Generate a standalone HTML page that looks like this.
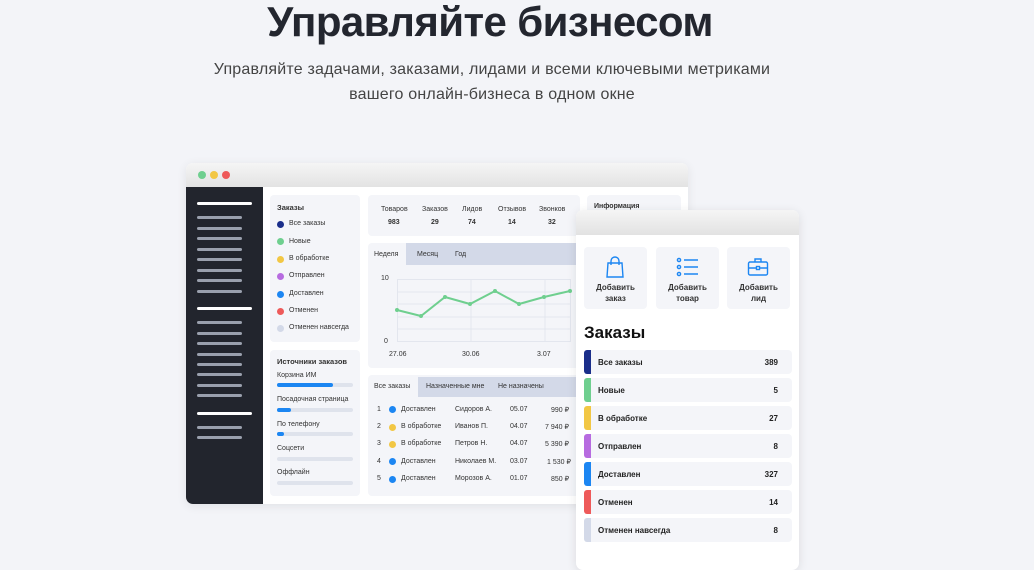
<!DOCTYPE html>
<html><head><meta charset="utf-8"><style>
*{margin:0;padding:0;box-sizing:border-box}
body{width:1034px;height:554px;background:#f3f4f8;font-family:"Liberation Sans","Noto Sans CJK SC",sans-serif;position:relative;overflow:hidden;color:#23262f}
.a{position:absolute}
h1{position:absolute;left:0;width:980px;top:-2px;text-align:center;font-size:42px;font-weight:bold;color:#23262f;letter-spacing:-0.6px}
.sub{position:absolute;left:0;width:984px;text-align:center;font-size:16px;color:#444;letter-spacing:0.2px}
.card{position:absolute;background:#f4f5f9;border-radius:4px}
.t{position:absolute;font-size:7px;color:#333;white-space:nowrap}
.sl{position:absolute;height:3px;border-radius:2px;background:#9aa0ad;left:197px;width:45px}
.sw{background:#fff;width:55px}
.dot{position:absolute;width:7px;height:7px;border-radius:50%}
.bar{position:absolute;left:277px;width:76px;height:4px;border-radius:2px;background:#dfe3ec}
.bar i{display:block;height:4px;border-radius:2px;background:#1c86f2}
.row{position:absolute;left:584px;width:208px;height:24px;background:#f4f5f9;border-radius:4px;font-size:8px;font-weight:bold;color:#222}
.row b{position:absolute;left:0;top:0;width:7px;height:24px;border-radius:3px 0 0 3px}
.row span{position:absolute;left:14px;top:8px}
.row em{position:absolute;right:14px;top:8px;font-style:normal}
.btn{position:absolute;top:247px;width:63px;height:62px;background:#f4f5f9;border-radius:4px;text-align:center;font-size:8px;font-weight:bold;color:#333;line-height:11px}
.btn svg{position:absolute;left:20px;top:9px}
.btn div{position:absolute;top:35px;width:100%}
</style></head><body>
<h1>Управляйте бизнесом</h1>
<div class="sub" style="top:61px">Управляйте задачами, заказами, лидами и всеми ключевыми метриками</div>
<div class="sub" style="top:86px">вашего онлайн-бизнеса в одном окне</div>

<div class="a" style="left:186px;top:163px;width:502px;height:341px;background:#fff;border-radius:7px;box-shadow:0 2px 10px rgba(0,0,0,.08);overflow:hidden">
 <div class="a" style="left:0;top:0;width:502px;height:24px;background:linear-gradient(#f5f5f5,#e3e3e3)"></div>
 <div class="a" style="left:0;top:24px;width:77px;height:317px;background:#22252d"></div>
</div>
<div class="dot" style="left:198px;top:171px;width:8px;height:8px;background:#6fcf8f"></div>
<div class="dot" style="left:210px;top:171px;width:8px;height:8px;background:#f2c744"></div>
<div class="dot" style="left:222px;top:171px;width:8px;height:8px;background:#ee5a5a"></div>

<div class="sl sw" style="top:202px"></div>
<div class="sl" style="top:216px"></div><div class="sl" style="top:227px"></div><div class="sl" style="top:237px"></div><div class="sl" style="top:248px"></div><div class="sl" style="top:258px"></div><div class="sl" style="top:269px"></div><div class="sl" style="top:279px"></div><div class="sl" style="top:290px"></div>
<div class="sl sw" style="top:307px"></div>
<div class="sl" style="top:321px"></div><div class="sl" style="top:332px"></div><div class="sl" style="top:342px"></div><div class="sl" style="top:353px"></div><div class="sl" style="top:363px"></div><div class="sl" style="top:373px"></div><div class="sl" style="top:384px"></div><div class="sl" style="top:394px"></div>
<div class="sl sw" style="top:412px"></div>
<div class="sl" style="top:426px"></div><div class="sl" style="top:436px"></div>

<div class="card" style="left:270px;top:195px;width:90px;height:147px"></div>
<div class="t" style="left:277px;top:203px;font-weight:bold;font-size:7.5px">Заказы</div>
<div class="dot" style="left:277px;top:221px;background:#1a2e8a"></div><div class="t" style="left:289px;top:220px">Все заказы</div>
<div class="dot" style="left:277px;top:238px;background:#6fcf8f"></div><div class="t" style="left:289px;top:238px">Новые</div>
<div class="dot" style="left:277px;top:256px;background:#f2c744"></div><div class="t" style="left:289px;top:255px">В обработке</div>
<div class="dot" style="left:277px;top:273px;background:#b76be0"></div><div class="t" style="left:289px;top:272px">Отправлен</div>
<div class="dot" style="left:277px;top:291px;background:#1c86f2"></div><div class="t" style="left:289px;top:290px">Доставлен</div>
<div class="dot" style="left:277px;top:308px;background:#ee5a5a"></div><div class="t" style="left:289px;top:307px">Отменен</div>
<div class="dot" style="left:277px;top:325px;background:#d3d9e8"></div><div class="t" style="left:289px;top:324px">Отменен навсегда</div>

<div class="card" style="left:270px;top:350px;width:90px;height:146px"></div>
<div class="t" style="left:277px;top:357px;font-weight:bold;font-size:7.5px">Источники заказов</div>
<div class="t" style="left:277px;top:372px">Корзина ИМ</div><div class="bar" style="top:383px"><i style="width:56px"></i></div>
<div class="t" style="left:277px;top:396px">Посадочная страница</div><div class="bar" style="top:408px"><i style="width:14px"></i></div>
<div class="t" style="left:277px;top:421px">По телефону</div><div class="bar" style="top:432px"><i style="width:7px"></i></div>
<div class="t" style="left:277px;top:445px">Соцсети</div><div class="bar" style="top:457px"></div>
<div class="t" style="left:277px;top:469px">Оффлайн</div><div class="bar" style="top:481px"></div>

<div class="card" style="left:368px;top:195px;width:212px;height:41px"></div>
<div class="t" style="left:381px;top:206px">Товаров</div><div class="t" style="left:388px;top:219px;font-weight:bold">983</div>
<div class="t" style="left:422px;top:206px">Заказов</div><div class="t" style="left:431px;top:219px;font-weight:bold">29</div>
<div class="t" style="left:462px;top:206px">Лидов</div><div class="t" style="left:468px;top:219px;font-weight:bold">74</div>
<div class="t" style="left:498px;top:206px">Отзывов</div><div class="t" style="left:508px;top:219px;font-weight:bold">14</div>
<div class="t" style="left:539px;top:206px">Звонков</div><div class="t" style="left:548px;top:219px;font-weight:bold">32</div>
<div class="card" style="left:587px;top:195px;width:94px;height:41px"></div>
<div class="t" style="left:594px;top:203px;font-weight:bold">Информация</div>

<div class="card" style="left:368px;top:243px;width:212px;height:125px"></div>
<div class="a" style="left:406px;top:243px;width:174px;height:22px;background:#d3d9e8"></div>
<div class="t" style="left:374px;top:251px">Неделя</div><div class="t" style="left:417px;top:251px">Месяц</div><div class="t" style="left:455px;top:251px">Год</div>
<div class="t" style="left:381px;top:275px">10</div><div class="t" style="left:384px;top:338px">0</div>
<svg class="a" style="left:390px;top:275px" width="190" height="72">
<g stroke="#e3e6ee" stroke-width="1" fill="none"><rect x="7.5" y="4.5" width="173" height="62"/><line x1="7" y1="17" x2="180" y2="17"/><line x1="7" y1="29" x2="180" y2="29"/><line x1="7" y1="42" x2="180" y2="42"/><line x1="7" y1="54" x2="180" y2="54"/><line x1="81" y1="4" x2="81" y2="66"/><line x1="155" y1="4" x2="155" y2="66"/></g>
<polyline fill="none" stroke="#6fcf8f" stroke-width="2" points="7,35 31,41 55,22 80,29 105,16 129,29 154,22 180,16"/>
<g fill="#6fcf8f"><circle cx="7" cy="35" r="2"/><circle cx="31" cy="41" r="2"/><circle cx="55" cy="22" r="2"/><circle cx="80" cy="29" r="2"/><circle cx="105" cy="16" r="2"/><circle cx="129" cy="29" r="2"/><circle cx="154" cy="22" r="2"/><circle cx="180" cy="16" r="2"/></g>
</svg>
<div class="t" style="left:389px;top:351px">27.06</div><div class="t" style="left:462px;top:351px">30.06</div><div class="t" style="left:537px;top:351px">3.07</div>

<div class="card" style="left:368px;top:375px;width:212px;height:121px"></div>
<div class="a" style="left:418px;top:377px;width:162px;height:20px;background:#d3d9e8"></div>
<div class="t" style="left:374px;top:383px">Все заказы</div><div class="t" style="left:426px;top:383px">Назначенные мне</div><div class="t" style="left:498px;top:383px">Не назначены</div>
<div class="t" style="left:377px;top:406px">1</div><div class="dot" style="left:389px;top:406px;background:#1c86f2"></div><div class="t" style="left:401px;top:406px">Доставлен</div><div class="t" style="left:455px;top:406px">Сидоров А.</div><div class="t" style="left:510px;top:406px">05.07</div><div class="t" style="left:551px;top:406px">990 ₽</div>
<div class="t" style="left:377px;top:423px">2</div><div class="dot" style="left:389px;top:424px;background:#f2c744"></div><div class="t" style="left:401px;top:423px">В обработке</div><div class="t" style="left:455px;top:423px">Иванов П.</div><div class="t" style="left:510px;top:423px">04.07</div><div class="t" style="left:545px;top:423px">7 940 ₽</div>
<div class="t" style="left:377px;top:440px">3</div><div class="dot" style="left:389px;top:441px;background:#f2c744"></div><div class="t" style="left:401px;top:440px">В обработке</div><div class="t" style="left:455px;top:440px">Петров Н.</div><div class="t" style="left:510px;top:440px">04.07</div><div class="t" style="left:545px;top:440px">5 390 ₽</div>
<div class="t" style="left:377px;top:458px">4</div><div class="dot" style="left:389px;top:458px;background:#1c86f2"></div><div class="t" style="left:401px;top:458px">Доставлен</div><div class="t" style="left:455px;top:458px">Николаев М.</div><div class="t" style="left:510px;top:458px">03.07</div><div class="t" style="left:547px;top:458px">1 530 ₽</div>
<div class="t" style="left:377px;top:475px">5</div><div class="dot" style="left:389px;top:476px;background:#1c86f2"></div><div class="t" style="left:401px;top:475px">Доставлен</div><div class="t" style="left:455px;top:475px">Морозов А.</div><div class="t" style="left:510px;top:475px">01.07</div><div class="t" style="left:551px;top:475px">850 ₽</div>

<div class="a" style="left:576px;top:210px;width:223px;height:360px;background:#fff;border-radius:7px;box-shadow:0 2px 10px rgba(0,0,0,.1);overflow:hidden">
 <div class="a" style="left:0;top:0;width:223px;height:25px;background:linear-gradient(#f5f5f5,#e2e2e2)"></div>
</div>
<div class="btn" style="left:584px"><svg width="22" height="22" viewBox="0 0 22 22" fill="none" stroke="#1c86f2" stroke-width="1.4"><path d="M4 7h14l1 14H3z"/><path d="M7 9V5a4 4 0 0 1 8 0v4"/></svg><div>Добавить<br>заказ</div></div>
<div class="btn" style="left:656px"><svg width="24" height="22" viewBox="0 0 24 22" fill="none" stroke="#1c86f2" stroke-width="1.4"><circle cx="3" cy="4" r="1.6"/><circle cx="3" cy="11" r="1.6"/><circle cx="3" cy="18" r="1.6"/><path d="M8 4h14M8 11h14M8 18h14"/></svg><div>Добавить<br>товар</div></div>
<div class="btn" style="left:727px"><svg width="22" height="22" viewBox="0 0 22 22" fill="none" stroke="#1c86f2" stroke-width="1.4"><rect x="1.5" y="6" width="19" height="13" rx="1.5"/><path d="M8 6V3h6v3M1.5 12h19"/><rect x="9.5" y="10.5" width="3" height="3" fill="#fff"/></svg><div>Добавить<br>лид</div></div>
<div class="a" style="left:584px;top:323px;font-size:17px;font-weight:bold;color:#111">Заказы</div>
<div class="row" style="top:350px"><b style="background:#1a2e8a"></b><span>Все заказы</span><em>389</em></div>
<div class="row" style="top:378px"><b style="background:#6fcf8f"></b><span>Новые</span><em>5</em></div>
<div class="row" style="top:406px"><b style="background:#f2c744"></b><span>В обработке</span><em>27</em></div>
<div class="row" style="top:434px"><b style="background:#b76be0"></b><span>Отправлен</span><em>8</em></div>
<div class="row" style="top:462px"><b style="background:#1c86f2"></b><span>Доставлен</span><em>327</em></div>
<div class="row" style="top:490px"><b style="background:#ee5a5a"></b><span>Отменен</span><em>14</em></div>
<div class="row" style="top:518px"><b style="background:#d3d9e8"></b><span>Отменен навсегда</span><em>8</em></div>
</body></html>
